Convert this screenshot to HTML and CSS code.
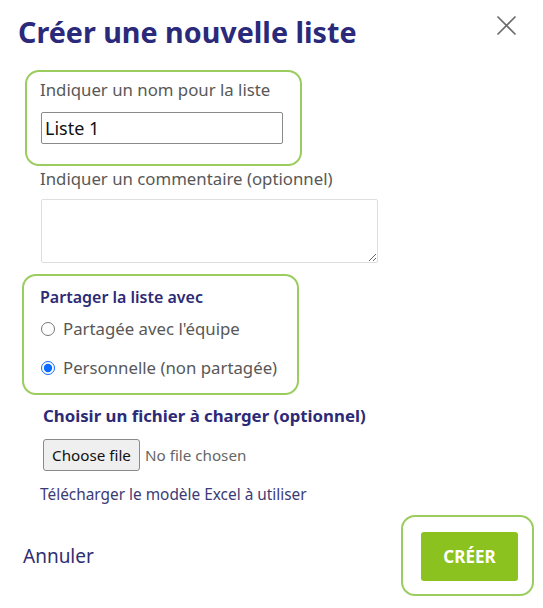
FILE: index.html
```html
<!DOCTYPE html>
<html lang="fr">
<head>
<meta charset="utf-8">
<title>Créer une nouvelle liste</title>
<link rel="stylesheet" href="styles.css">
</head>
<body>
<div class="dialog">
  <header class="head">
    <h1 class="title">Créer une nouvelle liste</h1>
    <button class="close" aria-label="Fermer">
      <svg width="21" height="21" viewBox="0 0 21 21"><path d="M1.5 1.5 L19.5 19.5 M19.5 1.5 L1.5 19.5" stroke="#6b6b6b" stroke-width="1.6" fill="none"/></svg>
    </button>
  </header>

  <div class="hl hl-name">
    <label class="label">Indiquer un nom pour la liste</label>
    <input class="text-input" type="text" value="Liste 1">
  </div>

  <div class="comment">
    <label class="label">Indiquer un commentaire (optionnel)</label>
    <textarea class="textarea"></textarea>
  </div>

  <div class="hl hl-share">
    <div class="legend">Partager la liste avec</div>
    <label class="radio-row"><input class="radio" type="radio" name="share"><span>Partagée avec l'équipe</span></label>
    <label class="radio-row"><input class="radio" type="radio" name="share" checked><span>Personnelle (non partagée)</span></label>
  </div>

  <div class="file-block">
    <div class="legend legend-file">Choisir un fichier à charger (optionnel)</div>
    <div class="file-row"><span class="file-btn">Choose file</span><span class="file-none">No file chosen</span></div>
    <a class="template" href="#">Télécharger le modèle Excel à utiliser</a>
  </div>

  <footer class="foot">
    <a class="cancel" href="#">Annuler</a>
    <div class="hl hl-btn"><button class="create">CRÉER</button></div>
  </footer>
</div>
</body>
</html>
```

FILE: styles.css
```css
* { box-sizing: border-box; }
html, body { margin: 0; padding: 0; background: #fff; }
body { font-family: "Noto Sans", "Open Sans", sans-serif; color: #555; }

.dialog { width: 543px; height: 608px; padding: 0; }

.head { display: flex; justify-content: space-between; align-items: flex-start; height: 70px; padding: 12px 26px 0 18px; }
.title { margin: 0; font-size: 28.7px; line-height: 40px; font-weight: 700; color: #2b2a7a; letter-spacing: 0; }
.close { border: 0; background: none; padding: 0; margin-top: 3px; width: 21px; height: 21px; }
.close svg { display: block; }

.hl { border: 2px solid #9bcc5e; border-radius: 14px; }

.hl-name { width: 277px; height: 96px; margin: 0 0 0 25px; padding: 6px 0 0 13px; }
.label { display: block; font-size: 16.8px; line-height: 23px; color: #585858; }
.text-input { display: block; margin: 11px 0 0 1px; width: 242px; height: 32px; border: 1px solid #8a8a8a; border-radius: 2px; padding: 0 3px; font-family: "Noto Sans", sans-serif; font-size: 18px; color: #111; outline: none; }

.comment { margin: 1px 0 0 40px; }
.textarea { display: block; margin: 9px 0 0 1px; width: 337px; height: 64px; border: 1px solid #dedede; border-radius: 2px; resize: vertical; }

.hl-share { width: 277px; height: 121px; margin: 11px 0 0 22px; padding: 10px 0 0 16px; }
.legend { font-size: 16px; line-height: 22px; font-weight: 600; color: #2d2a76; }
.radio-row { display: flex; align-items: center; gap: 8px; margin-top: 9px; font-size: 16.8px; line-height: 24px; color: #585858; }
.radio-row + .radio-row { margin-top: 15px; }
.radio { margin: 0 0 0 1px; width: 14px; height: 14px; accent-color: #0a6cff; }

.file-block { margin: 9px 0 0 43px; }
.legend-file { font-size: 16.8px; line-height: 23px; font-weight: 700; }
.file-row { display: flex; align-items: center; gap: 5px; margin-top: 12px; }
.file-btn { display: inline-flex; align-items: center; height: 32px; width: 97px; justify-content: center; border: 1px solid #8a8a8a; border-radius: 3px; background: #efefef; font-size: 15.2px; color: #111; }
.file-none { font-size: 15.2px; color: #666; }
.template { display: block; margin: 13px 0 0 -3px; font-size: 15.4px; line-height: 21px; color: #3b3a75; text-decoration: none; }

.foot { display: flex; justify-content: space-between; align-items: center; margin-top: 10px; padding: 0 9px 0 23px; }
.cancel { font-size: 19px; color: #2f2e72; text-decoration: none; }
.hl-btn { width: 133px; height: 81px; padding: 15px 0 0 18px; }
.create { width: 97px; height: 49px; border: 0; border-radius: 3px; background: #8cc220; color: #fff; font-family: "Noto Sans", sans-serif; font-size: 17px; font-weight: 700; }
```
